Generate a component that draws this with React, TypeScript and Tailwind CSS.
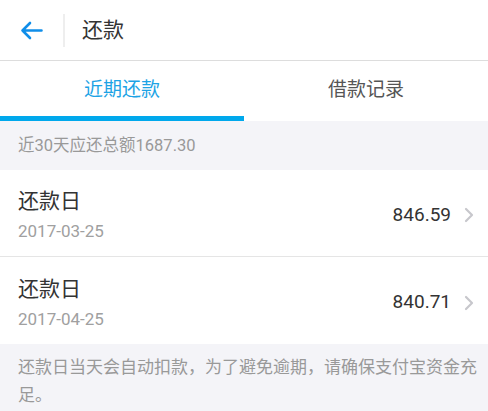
const font = "font-['Roboto','Noto_Sans_CJK_SC',sans-serif]";

const Chevron = () => (
  <svg width="10" height="16" viewBox="0 0 10 16" fill="none">
    <path d="M2 2l6 6-6 6" stroke="#c7c7cc" strokeWidth="2.2" strokeLinecap="round" strokeLinejoin="round" />
  </svg>
);

const rows = [
  { date: "2017-03-25", amount: "846.59" },
  { date: "2017-04-25", amount: "840.71" },
];

const App = () => {
  return (
    <div className={`w-[488px] h-[411px] overflow-hidden bg-[#f4f4f8] ${font}`}>
      {/* Header */}
      <div className="h-[61px] bg-white flex items-center border-b border-[#dddddd]">
        <div className="w-[63px] flex items-center pl-[20px]">
          <svg width="23" height="19" viewBox="0 0 23 19" fill="none">
            <path d="M21.5 9.5H2.5M10 2L2.5 9.5 10 17" stroke="#108ee9" strokeWidth="2.6" strokeLinecap="round" strokeLinejoin="round" />
          </svg>
        </div>
        <div className="w-[2px] h-[33px] bg-[#eeeeee]" />
        <div className="pl-[17px] text-[21px] text-[#333333] leading-none">还款</div>
      </div>

      {/* Tabs */}
      <div className="h-[60px] bg-white flex">
        <div className="flex-1 flex flex-col">
          <div className="flex-1 flex items-center justify-center text-[19px] text-[#1ca3e5] pt-[3px]">近期还款</div>
          <div className="h-[5px] bg-[#00a8ec]" />
        </div>
        <div className="flex-1 flex items-center justify-center text-[19px] text-[#555555] pt-[3px] pb-[5px]">借款记录</div>
      </div>

      {/* Summary */}
      <div className="h-[49px] flex items-center px-[18px] pt-[2px] text-[16.5px] text-[#999999]">近30天应还总额1687.30</div>

      {/* Rows */}
      <div className="bg-white">
        {rows.map((r, i) => (
          <div
            key={r.date}
            className={`h-[87px] flex items-center justify-between pl-[18px] pr-[14px] ${i === 0 ? "border-b border-[#e5e5e5]" : ""}`}
          >
            <div className="flex flex-col pt-[4px]">
              <div className="text-[21px] text-[#333333] leading-[26px]">还款日</div>
              <div className="text-[17px] text-[#a0a0a0] leading-[22px] mt-[6px]">{r.date}</div>
            </div>
            <div className="flex items-center gap-[13px] pt-[4px]">
              <span className="text-[19px] text-[#333333]">{r.amount}</span>
              <Chevron />
            </div>
          </div>
        ))}
      </div>

      {/* Footer note */}
      <div className="pl-[18px] pr-[8px] pt-[9px] text-[17px] leading-[28px] text-[#999999]">
        还款日当天会自动扣款，为了避免逾期，请确保支付宝资金充足。
      </div>
    </div>
  );
};

export default App;
